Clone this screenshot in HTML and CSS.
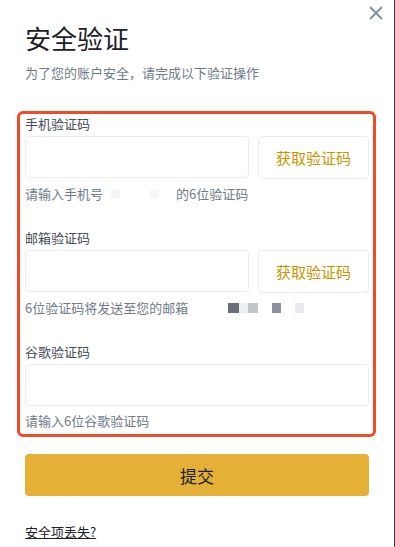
FILE: index.html
```html
<!DOCTYPE html>
<html lang="zh-CN">
<head>
<meta charset="utf-8">
<title>安全验证</title>
<link rel="stylesheet" href="styles.css">
</head>
<body>
<div class="page">
  <button class="close" aria-label="关闭">
    <svg width="14" height="14" viewBox="0 0 14 14"><path d="M1.5 1.5 L12.5 12.5 M12.5 1.5 L1.5 12.5" stroke="#848e9c" stroke-width="1.8" stroke-linecap="round" fill="none"/></svg>
  </button>
  <h1 class="title">安全验证</h1>
  <p class="subtitle">为了您的账户安全，请完成以下验证操作</p>

  <div class="verify-box">
    <div class="field">
      <div class="label">手机验证码</div>
      <div class="input-row">
        <div class="input"></div>
        <div class="get-code">获取验证码</div>
      </div>
      <div class="hint">请输入手机号<span class="redact phone"><i class="m m1"></i><i class="m m2"></i></span>的6位验证码</div>
    </div>

    <div class="field">
      <div class="label">邮箱验证码</div>
      <div class="input-row">
        <div class="input"></div>
        <div class="get-code">获取验证码</div>
      </div>
      <div class="hint">6位验证码将发送至您的邮箱<span class="mosaic"><i class="b b1"></i><i class="b b2"></i><i class="b b3"></i><i class="b gap"></i><i class="b b4"></i><i class="b gap"></i><i class="b b5"></i></span></div>
    </div>

    <div class="field">
      <div class="label">谷歌验证码</div>
      <div class="input-row">
        <div class="input full"></div>
      </div>
      <div class="hint">请输入6位谷歌验证码</div>
    </div>
  </div>

  <div class="submit">提交</div>
  <a class="lost" href="#">安全项丢失?</a>
</div>
</body>
</html>
```
FILE: styles.css
```css
* { box-sizing: border-box; }
html, body { margin: 0; padding: 0; background: #fff; }
body {
  font-family: "Noto Sans CJK SC", "Noto Sans", "Liberation Sans", sans-serif;
  color: #1e2026;
}
.page {
  position: relative;
  width: 395px;
  min-height: 547px;
  padding: 20px 25px 0 25px;
  border-right: 1px solid #3c3c3c;
}
.close {
  position: absolute;
  top: 5px;
  right: 10px;
  width: 16px;
  height: 16px;
  padding: 1px;
  border: 0;
  background: none;
  display: flex;
  align-items: center;
  justify-content: center;
}
.title {
  margin: 0;
  font-size: 26px;
  line-height: 36px;
  font-weight: 400;
  color: #1e2026;
}
.subtitle {
  margin: 7px 0 0 0;
  font-size: 13px;
  line-height: 20px;
  color: #707a8a;
}
.verify-box {
  margin: 28px -7px 0 -8px;
  border: 3px solid #ef4b27;
  border-radius: 6px;
  padding: 0 4px 4px 5px;
}
.field + .field { margin-top: 25px; }
.label {
  font-size: 13px;
  line-height: 19px;
  color: #474d57;
}
.input-row {
  display: flex;
  gap: 9px;
  margin-top: 3px;
}
.input {
  width: 224px;
  height: 42px;
  border: 1px solid #eaecef;
  border-radius: 4px;
  background: #fff;
}
.input.full { width: 100%; }
.get-code {
  flex: 1;
  height: 43px;
  border: 1px solid #eaecef;
  border-radius: 4px;
  display: flex;
  align-items: center;
  justify-content: center;
  font-size: 15px;
  color: #c99400;
}
.hint {
  margin-top: 5px;
  font-size: 13px;
  line-height: 19px;
  color: #707a8a;
  display: flex;
  align-items: center;
}
.redact.phone {
  display: inline-flex;
  width: 73px;
  height: 19px;
  align-items: center;
  padding-left: 8px;
  gap: 30px;
}
.m { display: block; width: 9px; height: 8px; background: #f4f5f6; }
.mosaic {
  display: inline-flex;
  margin-left: 40px;
  height: 10px;
}
.b { display: block; height: 10px; }
.b1 { width: 11px; background: #6b6f7a; }
.b2 { width: 9px; background: #eceef1; }
.b3 { width: 10px; background: #c2c4c9; }
.b.gap { width: 14px; background: transparent; }
.b4 { width: 9px; background: #8c909a; }
.b5 { width: 9px; background: #e9eaed; }
.submit {
  margin-top: 17px;
  height: 42px;
  border-radius: 4px;
  background: #e5b036;
  display: flex;
  align-items: center;
  justify-content: center;
  font-size: 17px;
  color: #1e2026;
}
.lost {
  display: inline-block;
  margin-top: 26px;
  font-size: 13px;
  line-height: 19px;
  color: #1e2026;
  text-decoration: underline;
}
```
